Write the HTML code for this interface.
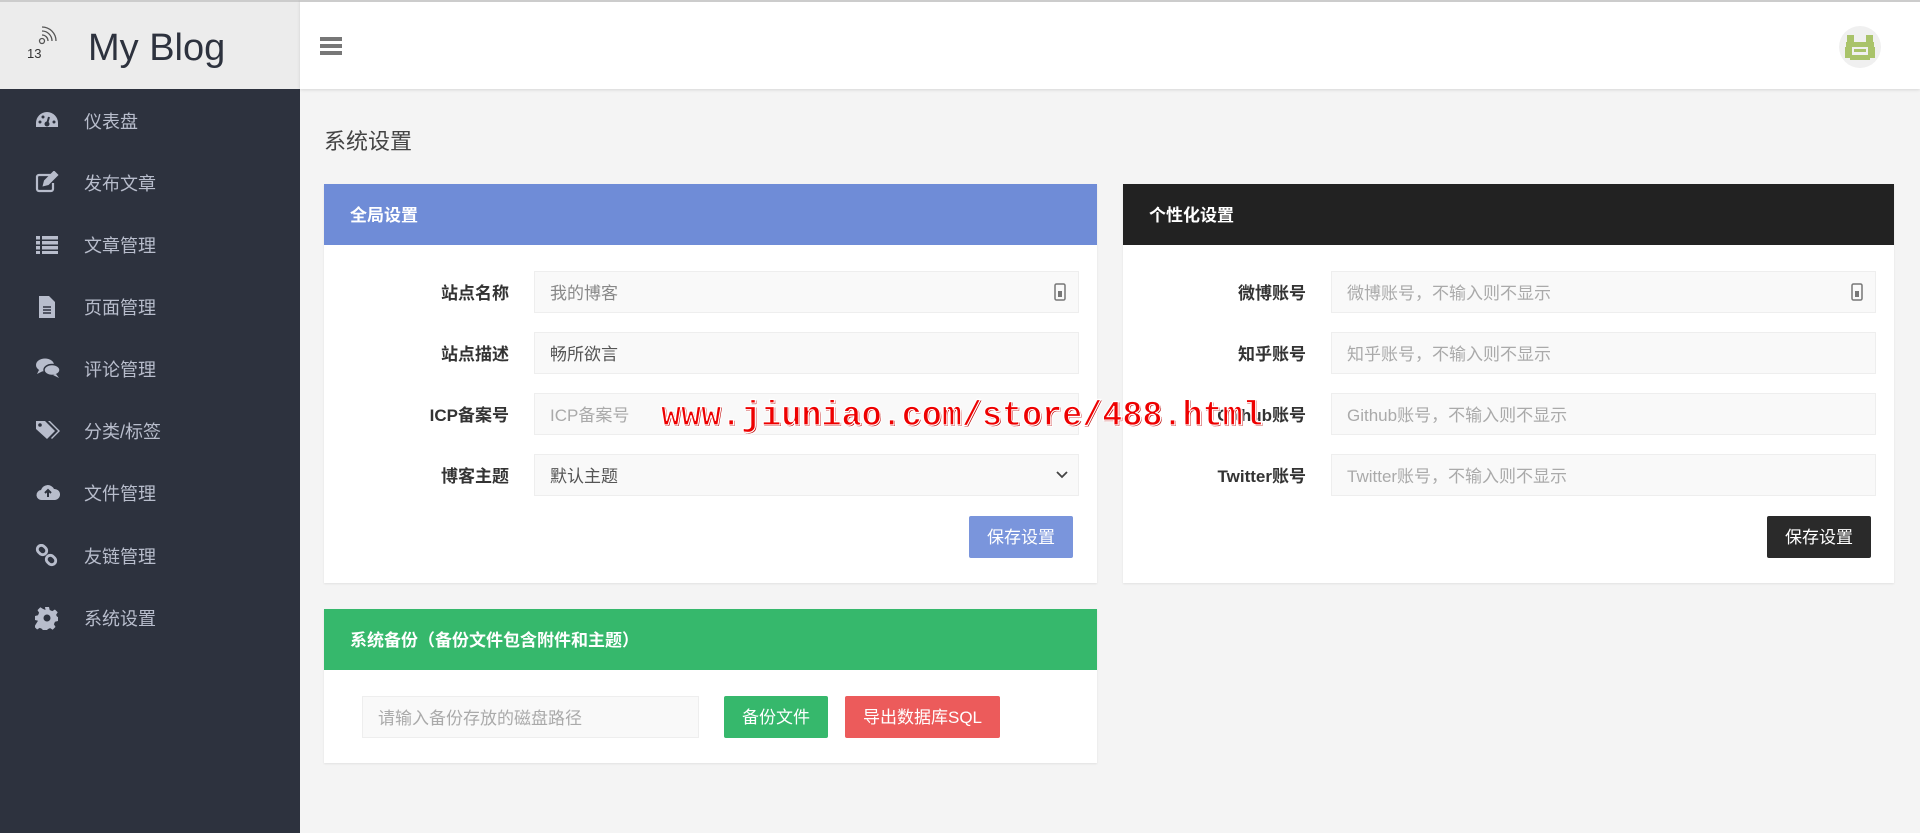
<!DOCTYPE html>
<html><head><meta charset="utf-8"><style>
*{box-sizing:border-box;margin:0;padding:0}
body{width:1920px;height:833px;overflow:hidden;background:#f4f4f4;font-family:"Liberation Sans","Noto Sans CJK SC",sans-serif;position:relative;color:#333}
.side{position:absolute;left:0;top:0;width:300px;height:833px;background:#2d323e}
.logo{height:89px;background:#ececec;border-top:2px solid #ccc;position:relative}
.logo .t{position:absolute;left:88px;top:25px;font-size:38px;color:#2d323e}
.logo .n{position:absolute;left:27px;top:44px;font-size:13px;color:#333}
.item{position:absolute;left:0;width:300px;height:40px;color:#b8bdcc;font-size:18px}
.item span{position:absolute;left:84px;top:8px}
.item svg{position:absolute;left:35px;top:9px}
.top{position:absolute;left:300px;top:0;width:1620px;height:89px;background:#fff;border-top:2px solid #ccc;box-shadow:0 1px 3px rgba(0,0,0,.12)}
.ham{position:absolute;left:20px;top:35px;width:22px}
.ham i{display:block;height:4px;background:#777;margin-bottom:3px}
h1{position:absolute;left:324px;top:124px;font-size:22px;font-weight:normal;color:#444}
.card{position:absolute;background:#fff;box-shadow:0 1px 2px rgba(0,0,0,.08)}
.card .hd{height:61px;color:#fff;font-weight:bold;font-size:17px;padding:17px 0 0 26px}
.lbl{position:absolute;font-weight:bold;font-size:17px;text-align:right;width:200px;color:#333;margin-top:-3px}
.inp{position:absolute;height:42px;background:#f9f9f9;border:1px solid #eee;font-size:17px;color:#888;padding:7px 0 0 15px}
.btn{position:absolute;height:42px;color:#fff;font-size:17px;text-align:center;padding-top:7px;border-radius:2px}
.wm{position:absolute;left:661px;top:396px;font-family:"Liberation Mono",monospace;font-weight:bold;font-size:35px;color:#e00;-webkit-text-stroke:1.2px #fff;text-shadow:1px 1px 0 #b00,2px 2px 0 #fff;transform:scaleX(.955);transform-origin:0 0}
</style></head><body>
<div class="side">
 <div class="logo">
  <svg style="position:absolute;left:38px;top:24px" width="24" height="20" viewBox="0 0 24 20" fill="none" stroke="#555" stroke-width="1.3"><circle cx="4" cy="15" r="2.5"/><path d="M4 9a6 6 0 0 1 6 6M4 5a10 10 0 0 1 10 10M4 1a14 14 0 0 1 14 14"/></svg>
  <span class="n">13</span><span class="t">My Blog</span>
 </div>
 <div class="item" style="top:100px"><svg width="24" height="22" viewBox="0 0 24 22"><path d="M12 3A11 11 0 0 0 1 14v4h22v-4A11 11 0 0 0 12 3z" fill="#b8bdcc"/><circle cx="12" cy="15" r="2.5" fill="#2d323e"/><path d="M12 15l2-7" stroke="#2d323e" stroke-width="2"/><circle cx="5" cy="13" r="1.5" fill="#2d323e"/><circle cx="19" cy="13" r="1.5" fill="#2d323e"/><circle cx="8" cy="8" r="1.5" fill="#2d323e"/></svg><span>仪表盘</span></div>
 <div class="item" style="top:162px"><svg width="24" height="22" viewBox="0 0 24 22" fill="none" stroke="#b8bdcc" stroke-width="2.2"><path d="M16 4H4a2 2 0 0 0-2 2v12a2 2 0 0 0 2 2h12a2 2 0 0 0 2-2v-6"/><path d="M9 14l1-4 9-9 3 3-9 9z" fill="#b8bdcc"/></svg><span>发布文章</span></div>
 <div class="item" style="top:224px"><svg width="24" height="22" viewBox="0 0 24 22" fill="#b8bdcc"><rect x="1" y="3" width="4" height="3.5"/><rect x="7" y="3" width="16" height="3.5"/><rect x="1" y="8" width="4" height="3.5"/><rect x="7" y="8" width="16" height="3.5"/><rect x="1" y="13" width="4" height="3.5"/><rect x="7" y="13" width="16" height="3.5"/><rect x="1" y="18" width="4" height="3"/><rect x="7" y="18" width="16" height="3"/></svg><span>文章管理</span></div>
 <div class="item" style="top:286px"><svg width="24" height="24" viewBox="0 0 24 24"><path d="M4 1h10l6 6v16H4z" fill="#b8bdcc"/><path d="M8 12h8M8 15h8M8 18h8" stroke="#2d323e" stroke-width="1.5"/></svg><span>页面管理</span></div>
 <div class="item" style="top:348px"><svg width="26" height="22" viewBox="0 0 26 22" fill="#b8bdcc"><ellipse cx="10" cy="8" rx="9" ry="6.5"/><path d="M4 13l-2 4 6-3z"/><ellipse cx="17" cy="13" rx="8" ry="5.5" stroke="#2d323e" stroke-width="1.5"/><path d="M21 17l3 4-6-3z"/></svg><span>评论管理</span></div>
 <div class="item" style="top:410px"><svg width="26" height="22" viewBox="0 0 26 22" fill="#b8bdcc"><path d="M1 2h9l10 10-8 8L1 10z"/><circle cx="5" cy="6" r="1.8" fill="#2d323e"/><path d="M13 2h2l10 10-8 8-1-1 7-7z"/></svg><span>分类/标签</span></div>
 <div class="item" style="top:472px"><svg width="26" height="22" viewBox="0 0 26 22"><path d="M7 19a5 5 0 0 1-1-10 7 7 0 0 1 13-1 5.5 5.5 0 0 1 1 11z" fill="#b8bdcc"/><path d="M13 16v-6M10 12l3-3 3 3" stroke="#2d323e" stroke-width="2" fill="none"/></svg><span>文件管理</span></div>
 <div class="item" style="top:535px"><svg width="24" height="24" viewBox="0 0 24 24" fill="none" stroke="#b8bdcc" stroke-width="2.8"><rect x="2" y="2" width="10" height="8" rx="4" transform="rotate(45 7 6)"/><rect x="11" y="12" width="10" height="8" rx="4" transform="rotate(45 16 16)"/></svg><span>友链管理</span></div>
 <div class="item" style="top:597px"><svg width="24" height="24" viewBox="0 0 24 24"><path d="M10 1h4l.7 3 2.6 1.1 2.6-1.6 2.8 2.8-1.6 2.6L22 10.6l1 .4v4l-3 .7-1.1 2.6 1.6 2.6-2.8 2.8-2.6-1.6-2.6 1.1-.5 2.8h-4l-.7-3-2.6-1.1-2.6 1.6-2.8-2.8 1.6-2.6L3 14.7 0 14v-4l3-.7 1.1-2.6-1.6-2.6 2.8-2.8 2.6 1.6L10.5 4z" fill="#b8bdcc"/><circle cx="12" cy="12" r="3.5" fill="#2d323e"/></svg><span>系统设置</span></div>
</div>
<div class="top">
 <div class="ham"><i></i><i></i><i></i></div>
 <svg style="position:absolute;left:1538px;top:23px" width="44" height="44" viewBox="0 0 44 44"><circle cx="22" cy="22" r="21" fill="#f0f0f0"/><g fill="#a9c36a"><rect x="9" y="10" width="7" height="7"/><rect x="28" y="10" width="7" height="7"/><rect x="8" y="17" width="28" height="5"/><rect x="7" y="22" width="7" height="11"/><rect x="30" y="22" width="7" height="11"/><rect x="12" y="30" width="20" height="5"/><rect x="16" y="24" width="12" height="3"/></g></svg>
</div>
<h1>系统设置</h1>

<div class="card" style="left:324px;top:184px;width:773px;height:399px">
 <div class="hd" style="background:#6f8cd7">全局设置</div>
</div>
<div class="lbl" style="left:309px;top:282px">站点名称</div>
<div class="inp" style="left:534px;top:271px;width:545px">我的博客<svg style="position:absolute;right:12px;top:11px" width="12" height="18" viewBox="0 0 12 18"><rect x="1" y="1" width="10" height="16" rx="1.5" fill="none" stroke="#777" stroke-width="1.5"/><rect x="4" y="8" width="4" height="6" fill="#777"/></svg></div>
<div class="lbl" style="left:309px;top:343px">站点描述</div>
<div class="inp" style="left:534px;top:332px;width:545px;color:#555">畅所欲言</div>
<div class="lbl" style="left:309px;top:404px">ICP备案号</div>
<div class="inp" style="left:534px;top:393px;width:545px;color:#aaa">ICP备案号</div>
<div class="lbl" style="left:309px;top:465px">博客主题</div>
<div class="inp" style="left:534px;top:454px;width:545px;color:#555">默认主题<svg style="position:absolute;right:10px;top:16px" width="12" height="8" viewBox="0 0 12 8"><path d="M1 1l5 5 5-5" stroke="#444" stroke-width="1.8" fill="none"/></svg></div>
<div class="btn" style="left:969px;top:516px;width:104px;background:#7a95dc">保存设置</div>

<div class="card" style="left:1123px;top:184px;width:771px;height:399px">
 <div class="hd" style="background:#222">个性化设置</div>
</div>
<div class="lbl" style="left:1106px;top:282px">微博账号</div>
<div class="inp" style="left:1331px;top:271px;width:545px;color:#aaa">微博账号，不输入则不显示<svg style="position:absolute;right:12px;top:11px" width="12" height="18" viewBox="0 0 12 18"><rect x="1" y="1" width="10" height="16" rx="1.5" fill="none" stroke="#777" stroke-width="1.5"/><rect x="4" y="8" width="4" height="6" fill="#777"/></svg></div>
<div class="lbl" style="left:1106px;top:343px">知乎账号</div>
<div class="inp" style="left:1331px;top:332px;width:545px;color:#aaa">知乎账号，不输入则不显示</div>
<div class="lbl" style="left:1106px;top:404px">Github账号</div>
<div class="inp" style="left:1331px;top:393px;width:545px;color:#aaa">Github账号，不输入则不显示</div>
<div class="lbl" style="left:1106px;top:465px">Twitter账号</div>
<div class="inp" style="left:1331px;top:454px;width:545px;color:#aaa">Twitter账号，不输入则不显示</div>
<div class="btn" style="left:1767px;top:516px;width:104px;background:#2a2a2a">保存设置</div>

<div class="card" style="left:324px;top:609px;width:773px;height:154px">
 <div class="hd" style="background:#36b86c">系统备份（备份文件包含附件和主题）</div>
</div>
<div class="inp" style="left:362px;top:696px;width:337px;color:#aaa">请输入备份存放的磁盘路径</div>
<div class="btn" style="left:724px;top:696px;width:104px;background:#36b86c">备份文件</div>
<div class="btn" style="left:845px;top:696px;width:155px;background:#ec5b5b">导出数据库SQL</div>

<div class="wm">www.jiuniao.com/store/488.html</div>
</body></html>
